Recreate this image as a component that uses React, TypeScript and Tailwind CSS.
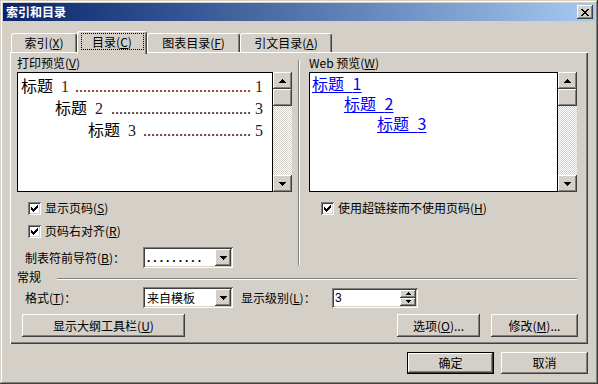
import React from "react";

const RAISED =
  "shadow-[inset_-1px_-1px_0_#404040,inset_1px_1px_0_#ffffff,inset_-2px_-2px_0_#808080,inset_2px_2px_0_#d4d0c8]";
const SUNKEN =
  "shadow-[inset_1px_1px_0_#808080,inset_-1px_-1px_0_#ffffff,inset_2px_2px_0_#404040,inset_-2px_-2px_0_#d4d0c8]";

const UP = "M3 0h1v1H3z M2 1h3v1H2z M1 2h5v1H1z M0 3h7v1H0z";
const DOWN = "M0 0h7v1H0z M1 1h5v1H1z M2 2h3v1H2z M3 3h1v1H3z";
const SUP = "M2 0h1v1H2z M1 1h3v1H1z M0 2h5v1H0z";
const SDOWN = "M0 0h5v1H0z M1 1h3v1H1z M2 2h1v1H2z";
const CHECK =
  "M9 3h1v1H9z M8 4h2v1H8z M3 5h1v1H3z M7 5h3v1H7z M3 6h2v1H3z M6 6h3v1H6z M3 7h5v1H3z M4 8h3v1H4z M5 9h1v1H5z";
const CLOSE_X =
  "M0 0h2v1H0z M6 0h2v1H6z M1 1h2v1H1z M5 1h2v1H5z M2 2h4v1H2z M3 3h2v1H3z M2 4h4v1H2z M1 5h2v1H1z M5 5h2v1H5z M0 6h2v1H0z M6 6h2v1H6z";

function Arrow({ dir }: { dir: "up" | "down" }) {
  return (
    <svg width="7" height="4" viewBox="0 0 7 4" shapeRendering="crispEdges">
      <path d={dir === "up" ? UP : DOWN} fill="#000" />
    </svg>
  );
}

function ScrollBar() {
  return (
    <div className="w-[19px] h-[120px] flex flex-col shrink-0">
      <div className={`h-[17px] bg-[#d4d0c8] flex items-center justify-center ${RAISED}`}>
        <Arrow dir="up" />
      </div>
      <div className={`h-[17px] bg-[#d4d0c8] ${RAISED}`} />
      <div className="flex-1 bg-[repeating-conic-gradient(#d4d0c8_0_25%,#ffffff_0_50%)] bg-[length:2px_2px]" />
      <div className={`h-[17px] bg-[#d4d0c8] flex items-center justify-center ${RAISED}`}>
        <Arrow dir="down" />
      </div>
    </div>
  );
}

function CheckBox() {
  return (
    <span className={`relative block w-[13px] h-[13px] bg-white shrink-0 ${SUNKEN}`}>
      <svg
        className="absolute left-0 top-0"
        width="13"
        height="13"
        viewBox="0 0 13 13"
        shapeRendering="crispEdges"
      >
        <path d={CHECK} fill="#000" />
      </svg>
    </span>
  );
}

function Combo({ children }: { children: React.ReactNode }) {
  return (
    <div className={`w-[90px] h-[21px] bg-white p-[2px] flex shrink-0 ${SUNKEN}`}>
      <div className="flex-1 flex items-center pl-[2px] overflow-hidden whitespace-nowrap">{children}</div>
      <div className={`w-[16px] h-full bg-[#d4d0c8] flex items-center justify-center ${RAISED}`}>
        <Arrow dir="down" />
      </div>
    </div>
  );
}

function Button({
  children,
  className,
}: {
  children: React.ReactNode;
  className: string;
}) {
  return (
    <div
      className={`flex items-center justify-center bg-[#d4d0c8] text-[12px] leading-[14px] ${RAISED} ${className}`}
    >
      {children}
    </div>
  );
}

const printRows = [
  { pad: "pl-[0px]", n: "1", page: "1", color: "text-[#5a1010]", dots: 44 },
  { pad: "pl-[34px]", n: "2", page: "3", color: "text-[#18183a]", dots: 35 },
  { pad: "pl-[67px]", n: "3", page: "5", color: "text-[#201838]", dots: 27 },
];

const webRows = [
  { pad: "pl-[0px]", n: "1" },
  { pad: "pl-[32px]", n: "2" },
  { pad: "pl-[65px]", n: "3" },
];

export default function App() {
  return (
    <div
      className={`w-[598px] h-[384px] bg-[#d4d0c8] p-[3px] text-[12px] leading-[14px] text-black select-none font-['Noto_Sans_CJK_SC','Noto_Sans_CJK_JP',sans-serif] shadow-[inset_-1px_-1px_0_#404040,inset_1px_1px_0_#d4d0c8,inset_-2px_-2px_0_#808080,inset_2px_2px_0_#ffffff]`}
    >
      {/* Title bar */}
      <div className="h-[18px] flex items-center pl-[3px] pr-[2px] bg-gradient-to-r from-[#0a246a] to-[#a6caf0]">
        <span className="text-white font-bold text-[12px] leading-[14px]">索引和目录</span>
        <div className={`ml-auto w-[16px] h-[14px] bg-[#d4d0c8] flex items-center justify-center ${RAISED}`}>
          <svg width="8" height="7" viewBox="0 0 8 7" shapeRendering="crispEdges">
            <path d={CLOSE_X} fill="#000" />
          </svg>
        </div>
      </div>

      <div className="px-[7px]">
        {/* Tabs */}
        <div className="mt-[10px] h-[21px] flex items-end pl-[1px]">
          <div className="h-[19px] w-[66px] flex items-center justify-center border-t border-l border-white border-r border-r-[#404040] rounded-t-[3px] shadow-[inset_-1px_0_0_#808080]">
            <span>
              索引(<u>X</u>)
            </span>
          </div>
          <div className="relative z-10 -mb-[2px] h-[23px] w-[70px] bg-[#d4d0c8] flex justify-center pt-[1px] border-t border-l border-white border-r border-r-[#404040] rounded-t-[3px] shadow-[inset_-1px_0_0_#808080]">
            <div className="h-[17px] w-[63px] border border-dotted border-black flex items-center justify-center">
              <span>
                目录(<u>C</u>)
              </span>
            </div>
          </div>
          <div className="h-[19px] w-[93px] flex items-center justify-center border-t border-l border-white border-r border-r-[#404040] rounded-t-[3px] shadow-[inset_-1px_0_0_#808080]">
            <span>
              图表目录(<u>F</u>)
            </span>
          </div>
          <div className="h-[19px] w-[92px] flex items-center justify-center border-t border-l border-white border-r border-r-[#404040] rounded-t-[3px] shadow-[inset_-1px_0_0_#808080]">
            <span>
              引文目录(<u>A</u>)
            </span>
          </div>
        </div>

        {/* Tab panel */}
        <div className="h-[292px] pt-[5px] pl-[7px] shadow-[inset_1px_1px_0_#ffffff,inset_-1px_-1px_0_#404040,inset_-2px_-2px_0_#808080]">
          <div className="flex items-start">
            {/* Left column */}
            <div className="w-[275px] shrink-0">
              <div className="h-[12px] leading-[12px] mb-[3px]">
                打印预览(<u>V</u>)
              </div>
              <div className="flex">
                <div className="w-[256px] h-[120px] border border-black bg-white pt-[1px] pl-[3px] pr-[9px]">
                  {printRows.map((r) => (
                    <div key={r.n} className={`h-[22px] pt-[2px] flex items-baseline ${r.pad}`}>
                      <span className="text-[16px] leading-[18px] whitespace-nowrap">标题</span>
                      <span
                        className={`ml-[8px] text-[16px] leading-[18px] font-['Liberation_Serif',serif] ${r.color}`}
                      >
                        {r.n}
                      </span>
                      <span
                        className={`ml-[3px] flex-1 text-right whitespace-nowrap text-[16px] leading-[18px] font-['Liberation_Serif',serif] ${r.color}`}
                      >
                        {".".repeat(r.dots)}
                      </span>
                      <span
                        className={`ml-[4px] text-[16px] leading-[18px] font-['Liberation_Serif',serif] ${r.color}`}
                      >
                        {r.page}
                      </span>
                    </div>
                  ))}
                </div>
                <ScrollBar />
              </div>
              <div className="mt-[8px] h-[16px] flex items-center pl-[11px] gap-[4px]">
                <CheckBox />
                <span>
                  显示页码(<u>S</u>)
                </span>
              </div>
              <div className="mt-[7px] h-[16px] flex items-center pl-[11px] gap-[4px]">
                <CheckBox />
                <span>
                  页码右对齐(<u>R</u>)
                </span>
              </div>
              <div className="mt-[8px] h-[21px] flex items-center">
                <span className="w-[126px] pl-[8px] shrink-0">
                  制表符前导符(<u>B</u>)：
                </span>
                <Combo>
                  <span className="font-bold tracking-[3px] font-['Liberation_Sans',sans-serif] text-[12px] leading-[14px]">
                    .........
                  </span>
                </Combo>
              </div>
            </div>

            {/* Separator */}
            <div className="ml-[6px] mt-[3px] w-[2px] h-[205px] border-l border-l-[#808080] border-r border-r-white shrink-0" />

            {/* Right column */}
            <div className="ml-[9px] w-[268px] shrink-0">
              <div className="h-[12px] leading-[12px] mb-[3px]">
                Web 预览(<u>W</u>)
              </div>
              <div className="flex">
                <div className="w-[249px] h-[120px] border border-black bg-white pl-[2px]">
                  {webRows.map((r) => (
                    <div key={r.n} className={`h-[20px] ${r.pad}`}>
                      <span className="inline-block h-[20px] text-[16px] leading-[20px] text-[#0000ff] underline underline-offset-[2px] whitespace-nowrap [word-spacing:5px]">
                        标题 {r.n}
                      </span>
                    </div>
                  ))}
                </div>
                <ScrollBar />
              </div>
              <div className="mt-[8px] h-[16px] flex items-center pl-[12px] gap-[4px]">
                <CheckBox />
                <span>
                  使用超链接而不使用页码(<u>H</u>)
                </span>
              </div>
            </div>
          </div>

          {/* 常规 */}
          <div className="mt-[2px] h-[14px] flex items-start">
            <span className="w-[40px] shrink-0">常规</span>
            <div className="mt-[8px] flex-1 mr-[11px] h-[2px] border-t border-t-[#808080] border-b border-b-white" />
          </div>

          {/* 格式 row */}
          <div className="mt-[3px] h-[21px] flex items-center">
            <span className="w-[126px] pl-[8px] shrink-0">
              格式(<u>T</u>)：
            </span>
            <Combo>
              <span className="text-[12px] leading-[14px]">来自模板</span>
            </Combo>
            <span className="ml-[8px] w-[91px] shrink-0">
              显示级别(<u>L</u>)：
            </span>
            <div className={`w-[86px] h-[20px] bg-white p-[2px] flex ${SUNKEN}`}>
              <div className="flex-1 pl-[1px] flex items-center font-['Liberation_Sans',sans-serif] text-[12px]">
                3
              </div>
              <div className="w-[16px] flex flex-col">
                <div className={`h-[8px] bg-[#d4d0c8] flex items-center justify-center ${RAISED}`}>
                  <svg width="5" height="3" viewBox="0 0 5 3" shapeRendering="crispEdges">
                    <path d={SUP} fill="#000" />
                  </svg>
                </div>
                <div className={`h-[8px] bg-[#d4d0c8] flex items-center justify-center ${RAISED}`}>
                  <svg width="5" height="3" viewBox="0 0 5 3" shapeRendering="crispEdges">
                    <path d={SDOWN} fill="#000" />
                  </svg>
                </div>
              </div>
            </div>
          </div>

          {/* Buttons row */}
          <div className="mt-[6px] h-[23px] flex">
            <Button className="ml-[5px] w-[163px] h-[23px]">
              <span>
                显示大纲工具栏(<u>U</u>)
              </span>
            </Button>
            <div className="ml-auto mr-[10px] flex gap-[11px]">
              <Button className="w-[83px] h-[23px]">
                <span>
                  选项(<u>O</u>)...
                </span>
              </Button>
              <Button className="w-[87px] h-[23px]">
                <span>
                  修改(<u>M</u>)...
                </span>
              </Button>
            </div>
          </div>
        </div>

        {/* Bottom buttons */}
        <div className="mt-[8px] flex justify-end gap-[7px]">
          <div className="w-[87px] h-[22px] border border-black">
            <Button className="w-full h-full">确定</Button>
          </div>
          <Button className="w-[87px] h-[22px]">取消</Button>
        </div>
      </div>
    </div>
  );
}
